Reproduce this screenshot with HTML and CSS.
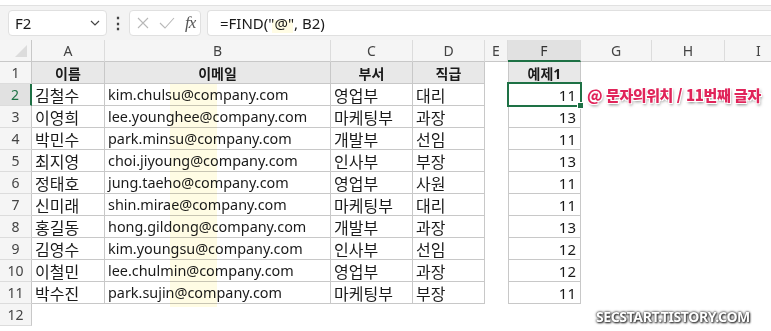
FILE: index.html
```html
<!DOCTYPE html>
<html lang="ko">
<head>
  <meta charset="UTF-8">
  <title>FIND 예제</title>
  <link rel="stylesheet" href="styles.css">
</head>
<body>
  <div class="toolbar">
    <div class="name-box">
      <span>F2</span>
      <svg class="chevron" width="10" height="6" viewBox="0 0 10 6"><path d="M1 1l4 4 4-4" fill="none" stroke="#444" stroke-width="1.2"/></svg>
    </div>
    <div class="dots">⋮</div>
    <div class="fx-box">
      <svg width="12" height="12" viewBox="0 0 12 12"><path d="M1 1l10 10M11 1L1 11" stroke="#b8b8b8" stroke-width="1.1" fill="none"/></svg>
      <svg width="16" height="12" viewBox="0 0 16 12"><path d="M1 6l5 5L15 1" stroke="#b8b8b8" stroke-width="1.1" fill="none"/></svg>
      <span class="fx"><i>f</i><i>x</i></span>
    </div>
    <div class="formula">=FIND("@", B2)</div>
  </div>

  <div class="sheet">
    <div class="corner"></div>
    <div class="col-head">A</div>
    <div class="col-head">B</div>
    <div class="col-head">C</div>
    <div class="col-head">D</div>
    <div class="col-head">E</div>
    <div class="col-head active">F</div>
    <div class="col-head">G</div>
    <div class="col-head">H</div>
    <div class="col-head last">I</div>

    <div class="row-head">1</div>
    <div class="cell th">이름</div>
    <div class="cell th">이메일</div>
    <div class="cell th">부서</div>
    <div class="cell th">직급</div>
    <div class="blank"></div>
    <div class="cell th f">예제1</div>
    <div class="blank"></div><div class="blank"></div><div class="blank"></div>

    <div class="row-head active">2</div>
    <div class="cell">김철수</div>
    <div class="cell email">kim.chulsu@company.com</div>
    <div class="cell">영업부</div>
    <div class="cell">대리</div>
    <div class="blank"></div>
    <div class="cell f num selected">11</div>
    <div class="blank"></div><div class="blank"></div><div class="blank"></div>

    <div class="row-head">3</div>
    <div class="cell">이영희</div>
    <div class="cell email">lee.younghee@company.com</div>
    <div class="cell">마케팅부</div>
    <div class="cell">과장</div>
    <div class="blank"></div>
    <div class="cell f num">13</div>
    <div class="blank"></div><div class="blank"></div><div class="blank"></div>

    <div class="row-head">4</div>
    <div class="cell">박민수</div>
    <div class="cell email">park.minsu@company.com</div>
    <div class="cell">개발부</div>
    <div class="cell">선임</div>
    <div class="blank"></div>
    <div class="cell f num">11</div>
    <div class="blank"></div><div class="blank"></div><div class="blank"></div>

    <div class="row-head">5</div>
    <div class="cell">최지영</div>
    <div class="cell email">choi.jiyoung@company.com</div>
    <div class="cell">인사부</div>
    <div class="cell">부장</div>
    <div class="blank"></div>
    <div class="cell f num">13</div>
    <div class="blank"></div><div class="blank"></div><div class="blank"></div>

    <div class="row-head">6</div>
    <div class="cell">정태호</div>
    <div class="cell email">jung.taeho@company.com</div>
    <div class="cell">영업부</div>
    <div class="cell">사원</div>
    <div class="blank"></div>
    <div class="cell f num">11</div>
    <div class="blank"></div><div class="blank"></div><div class="blank"></div>

    <div class="row-head">7</div>
    <div class="cell">신미래</div>
    <div class="cell email">shin.mirae@company.com</div>
    <div class="cell">마케팅부</div>
    <div class="cell">대리</div>
    <div class="blank"></div>
    <div class="cell f num">11</div>
    <div class="blank"></div><div class="blank"></div><div class="blank"></div>

    <div class="row-head">8</div>
    <div class="cell">홍길동</div>
    <div class="cell email">hong.gildong@company.com</div>
    <div class="cell">개발부</div>
    <div class="cell">과장</div>
    <div class="blank"></div>
    <div class="cell f num">13</div>
    <div class="blank"></div><div class="blank"></div><div class="blank"></div>

    <div class="row-head">9</div>
    <div class="cell">김영수</div>
    <div class="cell email">kim.youngsu@company.com</div>
    <div class="cell">인사부</div>
    <div class="cell">선임</div>
    <div class="blank"></div>
    <div class="cell f num">12</div>
    <div class="blank"></div><div class="blank"></div><div class="blank"></div>

    <div class="row-head">10</div>
    <div class="cell">이철민</div>
    <div class="cell email">lee.chulmin@company.com</div>
    <div class="cell">영업부</div>
    <div class="cell">과장</div>
    <div class="blank"></div>
    <div class="cell f num">12</div>
    <div class="blank"></div><div class="blank"></div><div class="blank"></div>

    <div class="row-head">11</div>
    <div class="cell">박수진</div>
    <div class="cell email">park.sujin@company.com</div>
    <div class="cell">마케팅부</div>
    <div class="cell">부장</div>
    <div class="blank"></div>
    <div class="cell f num">11</div>
    <div class="blank"></div><div class="blank"></div><div class="blank"></div>

    <div class="row-head">12</div>
  </div>

  <!-- annotations drawn over the screenshot -->
  <div class="mark mark-formula"></div>
  <div class="mark mark-column"></div>
  <div class="note">@ 문자의위치 / 11번째 글자</div>
  <div class="watermark">SECSTART.TISTORY.COM</div>
</body>
</html>
```

FILE: styles.css
```css
body {
  margin: 0;
  background-color: #fff;
  font-family: 'Segoe UI', 'Noto Sans', 'Noto Sans CJK KR', sans-serif;
  color: #1a1a1a;
  position: relative;
  width: 771px;
  height: 331px;
  overflow: hidden;
}
.toolbar {
  display: flex;
  align-items: center;
  height: 35px;
  margin-top: 5px;
  padding: 0 0 0 8px;
  background-color: #f3f3f3;
  box-sizing: border-box;
  border-top: 1px solid #e1e1e1;
}
.name-box {
  display: flex;
  align-items: center;
  justify-content: space-between;
  width: 99px;
  height: 26px;
  box-sizing: border-box;
  padding: 0 6px 0 6px;
  background-color: #fff;
  border: 1px solid #e0e0e0;
  border-radius: 4px;
  font-size: 15px;
}
.dots {
  width: 22px;
  text-align: center;
  font-size: 16px;
  font-weight: bold;
  color: #444;
}
.fx-box {
  display: flex;
  align-items: center;
  gap: 10px;
  width: 72px;
  height: 26px;
  box-sizing: border-box;
  padding: 0 4px 0 7px;
  background-color: #fff;
  border: 1px solid #e0e0e0;
  border-radius: 4px;
}
.fx {
  font-family: 'Liberation Serif', serif;
  font-size: 17px;
  color: #555;
  letter-spacing: -1px;
}
.formula {
  flex: 1;
  height: 26px;
  margin-left: 6px;
  box-sizing: border-box;
  padding: 0 0 0 12px;
  background-color: #fff;
  border: 1px solid #e0e0e0;
  border-right: none;
  border-radius: 4px 0 0 4px;
  font-size: 15px;
  line-height: 24px;
}
.sheet {
  display: grid;
  grid-template-columns: 32px 73px 226px 82px 72px 23px 73px 71px 73px 1fr;
  grid-auto-rows: 22px;
}
.corner {
  background-color: #f5f5f5;
  border-right: 1px solid #c8c8c8;
  border-bottom: 1px solid #c8c8c8;
  position: relative;
}
.corner::after {
  content: '';
  position: absolute;
  right: 4px;
  bottom: 4px;
  border-left: 12px solid transparent;
  border-bottom: 12px solid #dcdcdc;
}
.col-head {
  display: flex;
  align-items: center;
  justify-content: center;
  background-color: #f5f5f5;
  border-right: 1px solid #dcdcdc;
  border-bottom: 1px solid #c8c8c8;
  font-size: 14px;
  color: #444;
}
.col-head.last {
  justify-content: flex-start;
  padding-left: 31px;
  border-right: none;
}
.col-head.active {
  background-color: #e1e1e1;
  border-bottom: 2px solid #1e7145;
  color: #333;
}
.row-head {
  grid-column: 1;
  display: flex;
  align-items: center;
  justify-content: center;
  background-color: #f5f5f5;
  border-right: 1px solid #c8c8c8;
  border-bottom: 1px solid #dcdcdc;
  font-size: 14px;
  color: #444;
}
.row-head.active {
  background-color: #e1e1e1;
  border-right: 2px solid #1e7145;
  color: #1e7145;
}
.cell {
  display: flex;
  align-items: center;
  padding: 0 3px;
  border-right: 1px solid #c8c8c8;
  border-bottom: 1px solid #c8c8c8;
  font-size: 16px;
  white-space: nowrap;
  overflow: hidden;
}
.cell.email {
  font-size: 14.4px;
}
.cell.th {
  justify-content: center;
  background-color: #e8e8e8;
  font-size: 14px;
  font-weight: bold;
}
.cell.f {
  border-left: 1px solid #c8c8c8;
}
.cell.num {
  justify-content: flex-end;
  padding-right: 4px;
  font-size: 15px;
}
.cell.selected {
  position: relative;
  overflow: visible;
}
.cell.selected::before {
  content: '';
  position: absolute;
  left: -2px;
  top: -2px;
  right: -2px;
  bottom: -2px;
  border: 2px solid #1e7145;
}
.cell.selected::after {
  content: '';
  position: absolute;
  right: -4px;
  bottom: -4px;
  width: 5px;
  height: 5px;
  background-color: #1e7145;
  border: 1px solid #fff;
}
.mark {
  position: absolute;
  background-color: rgba(255, 240, 130, 0.22);
  mix-blend-mode: multiply;
}
.mark-formula {
  left: 272px;
  top: 20px;
  width: 21px;
  height: 13px;
}
.mark-column {
  left: 170px;
  top: 84px;
  width: 47px;
  height: 223px;
}
.note {
  position: absolute;
  left: 587px;
  top: 84px;
  font-family: 'Noto Sans CJK KR', sans-serif;
  font-size: 15px;
  font-weight: 900;
  letter-spacing: -0.4px;
  color: #e0245a;
  text-shadow: -1px -1px 0 #fff, 1px -1px 0 #fff, -1px 1px 0 #fff, 1px 1px 0 #fff, 1px 2px 3px rgba(0,0,0,0.5);
}
.watermark {
  position: absolute;
  left: 596px;
  top: 307px;
  font-family: 'Noto Sans', sans-serif;
  font-size: 14px;
  font-weight: bold;
  letter-spacing: -0.4px;
  color: #fff;
  text-shadow: 0 0 2px #333, 0 0 3px #555, 1px 1px 2px #222;
}
```
